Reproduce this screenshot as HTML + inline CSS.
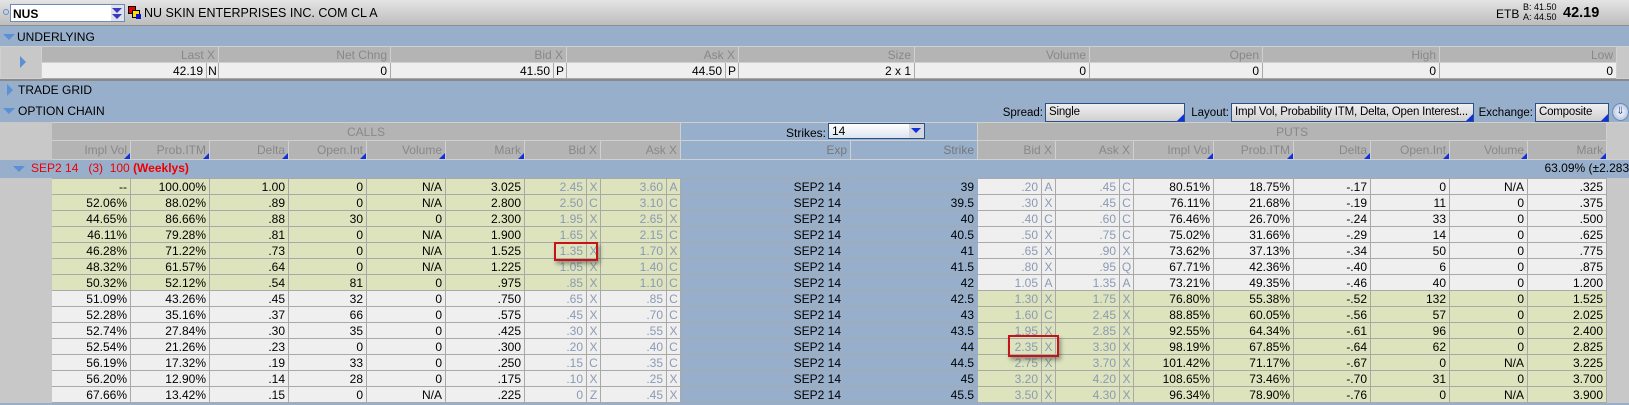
<!DOCTYPE html>
<html><head><meta charset="utf-8"><style>
*{box-sizing:border-box;margin:0;padding:0}
body{width:1629px;height:405px;overflow:hidden;background:#98afcb;font-family:"Liberation Sans",sans-serif;font-size:12px;color:#000;position:relative}
.abs{position:absolute}
.top{left:0;top:0;width:1629px;height:26px;background:linear-gradient(#e4e4e4,#bdbdbd);border-bottom:1px solid #8e8e8e}
.band{left:0;width:1629px;background:#98afcb}
.tri{position:absolute;width:0;height:0}
.tdown{border-left:6px solid transparent;border-right:6px solid transparent;border-top:6px solid #5b8fd6}
.tright{border-top:6px solid transparent;border-bottom:6px solid transparent;border-left:6px solid #5b8fd6}
table{border-collapse:collapse;table-layout:fixed;position:absolute;left:0}
td{height:16px;padding:0 3px;text-align:right;white-space:nowrap;overflow:hidden;border:1px solid #a9a9a9;font-size:12px;line-height:14px}
td.l{padding:0 1px;text-align:center}
td.gut{background:#c8c8c8!important;border-color:#c8c8c8}
td.bl{background:#98afcb!important;border-left-color:#98afcb;border-right-color:#98afcb;text-align:right;padding-right:9px}
td.bl.s{padding-right:3px}
td.q{color:#8b9ab4}
.hd td{background:#b4b4b4;color:#888;position:relative;border-color:#d0d0d0}
.hd td.srt::after{content:"";position:absolute;right:0;bottom:0;border-left:6px solid transparent;border-bottom:6px solid #1030e0}
.box{position:absolute;height:19px;background:linear-gradient(#f0f0f0,#cfcfcf);border:1px solid #2a4f8a;font-size:11.5px;padding:2px 3px;white-space:nowrap;overflow:hidden;letter-spacing:-0.2px}
.box::after{content:"";position:absolute;right:0;bottom:0;border-left:7px solid transparent;border-bottom:7px solid #1030e0}
.lab{position:absolute;top:107px;font-size:11.5px;text-align:right;white-space:nowrap}
.red{position:absolute;border:2px solid #c4141b;box-shadow:2px 3px 4px rgba(0,0,0,.35)}
.cg,.pg{background:#dce3bd}.cw,.pw{background:#efefef}
</style></head><body>

<div class="abs top"></div>
<div class="abs" style="left:3px;top:9px;width:6px;height:6px;border:1px solid #5b8fd6;border-radius:50%"></div>
<div class="abs" style="left:10px;top:4px;width:115px;height:18px;background:#fff;border:1px solid #6d8bb7;font-weight:bold;font-size:12px;padding:2px 2px">NUS</div>
<div class="abs" style="left:111px;top:5px;width:13px;height:16px;background:#dfe3ea"></div>
<div class="abs tri" style="left:112px;top:8px;border-left:5px solid transparent;border-right:5px solid transparent;border-top:5px solid #3a3ac0"></div>
<div class="abs tri" style="left:112px;top:14px;border-left:5px solid transparent;border-right:5px solid transparent;border-top:5px solid #3a3ac0"></div>
<div class="abs" style="left:128px;top:6px;width:8px;height:8px;background:#e00;border:1px solid #000"></div>
<div class="abs" style="left:132px;top:10px;width:8px;height:8px;background:#fd0;border:1px solid #000"></div>
<div class="abs" style="left:136px;top:14px;width:5px;height:5px;background:#11c"></div>
<div class="abs" style="left:144px;top:6px;font-size:12.5px">NU SKIN ENTERPRISES INC. COM CL A</div>
<div class="abs" style="left:1496px;top:7px;font-size:12px">ETB</div>
<div class="abs" style="left:1523px;top:2px;font-size:9px;line-height:10px">B: 41.50<br>A: 44.50</div>
<div class="abs" style="left:1563px;top:5px;font-size:14.5px;font-weight:bold">42.19</div>

<div class="abs band" style="top:27px;height:19px"></div>
<div class="tri tdown" style="left:3px;top:34px"></div>
<div class="abs" style="left:17px;top:30px;font-size:12px">UNDERLYING</div>

<table style="top:46px;width:1629px">
<colgroup><col style="width:41px"><col style="width:165px"><col style="width:12px"><col style="width:172px"><col style="width:163px"><col style="width:13px"><col style="width:159px"><col style="width:13px"><col style="width:176px"><col style="width:175px"><col style="width:173px"><col style="width:177px"><col style="width:177px"><col style="width:13px"></colgroup>
<tr class="hd"><td class="gut" rowspan="2" style="position:relative"><div class="tri tright" style="left:19px;top:9px"></div></td><td colspan="2">Last X</td><td>Net Chng</td><td colspan="2">Bid X</td><td colspan="2">Ask X</td><td>Size</td><td>Volume</td><td>Open</td><td>High</td><td>Low</td><td class="gut" rowspan="2"></td></tr>
<tr><td class="cw">42.19</td><td class="cw l">N</td><td class="cw">0</td><td class="cw">41.50</td><td class="cw l">P</td><td class="cw">44.50</td><td class="cw l">P</td><td class="cw">2 x 1</td><td class="cw">0</td><td class="cw">0</td><td class="cw">0</td><td class="cw">0</td></tr>
</table>
<div class="abs" style="left:0;top:79px;width:1629px;height:2px;background:#8a8a8a"></div>

<div class="tri tright" style="left:7px;top:84px"></div>
<div class="abs" style="left:18px;top:83px;font-size:12px">TRADE GRID</div>
<div class="tri tdown" style="left:3px;top:108px"></div>
<div class="abs" style="left:18px;top:104px;font-size:12px">OPTION CHAIN</div>

<div class="lab" style="right:586px">Spread:</div>
<div class="box" style="left:1045px;top:103px;width:140px">Single</div>
<div class="lab" style="right:400px">Layout:</div>
<div class="box" style="left:1231px;top:103px;width:243px">Impl Vol, Probability ITM, Delta, Open Interest...</div>
<div class="lab" style="right:96px">Exchange:</div>
<div class="box" style="left:1535px;top:103px;width:74px">Composite</div>
<div class="abs" style="left:1612px;top:103px;width:17px;height:18px;border-radius:50%;background:radial-gradient(#fff,#9db4d6);border:1px solid #6d8bb7;font-size:10px;color:#3050a0;text-align:center;line-height:16px">&#8659;</div>

<table style="top:122px;width:1629px">
<colgroup><col style="width:51px"><col style="width:79px"><col style="width:79px"><col style="width:79px"><col style="width:78px"><col style="width:79px"><col style="width:79px"><col style="width:62px"><col style="width:14px"><col style="width:66px"><col style="width:14px"><col style="width:170px"><col style="width:127px"><col style="width:64px"><col style="width:14px"><col style="width:64px"><col style="width:14px"><col style="width:80px"><col style="width:80px"><col style="width:77px"><col style="width:79px"><col style="width:78px"><col style="width:79px"><col style="width:23px"></colgroup>
<tr class="hd" style="height:18px"><td class="gut" rowspan="2" style="border-color:#c8c8c8"></td><td colspan="10" style="text-align:center">CALLS</td><td class="bl" colspan="2"></td><td colspan="10" style="text-align:center">PUTS</td><td style="background:#c8c8c8" rowspan="2"></td></tr>
<tr class="hd" style="height:19px"><td class="srt">Impl Vol</td><td class="srt">Prob.ITM</td><td class="srt">Delta</td><td class="srt">Open.Int</td><td class="srt">Volume</td><td class="srt">Mark</td><td colspan="2">Bid X</td><td colspan="2">Ask X</td><td class="bl s" style="color:#777">Exp</td><td class="bl s" style="color:#777">Strike</td><td colspan="2">Bid X</td><td colspan="2">Ask X</td><td class="srt">Impl Vol</td><td class="srt">Prob.ITM</td><td class="srt">Delta</td><td class="srt">Open.Int</td><td class="srt">Volume</td><td class="srt">Mark</td></tr>
<tr style="height:17px"><td colspan="24" style="background:#98afcb;border-color:#98afcb;text-align:left;color:#e00;padding-left:30px;position:relative;height:17px">SEP2 14 &nbsp;&nbsp;(3) &nbsp;100 <b>(Weeklys)</b><span style="position:absolute;right:0;top:1px;color:#000">63.09% (±2.283</span><div class="tri tdown" style="left:12px;top:6px"></div></td></tr>
</table>

<div class="abs" style="left:786px;top:126px;font-size:12px">Strikes:</div>
<div class="abs" style="left:828px;top:123px;width:97px;height:16px;background:linear-gradient(#fff,#dce4f0);border:1px solid #2a4f8a;padding:0 3px;font-size:12px">14</div>
<div class="abs" style="left:909px;top:124px;width:15px;height:14px;background:#d4d8de"></div>
<div class="tri" style="left:911px;top:128px;border-left:5px solid transparent;border-right:5px solid transparent;border-top:5px solid #1030e0"></div>

<table style="top:178px;width:1629px">
<colgroup><col style="width:51px"><col style="width:79px"><col style="width:79px"><col style="width:79px"><col style="width:78px"><col style="width:79px"><col style="width:79px"><col style="width:62px"><col style="width:14px"><col style="width:66px"><col style="width:14px"><col style="width:170px"><col style="width:127px"><col style="width:64px"><col style="width:14px"><col style="width:64px"><col style="width:14px"><col style="width:80px"><col style="width:80px"><col style="width:77px"><col style="width:79px"><col style="width:78px"><col style="width:79px"><col style="width:23px"></colgroup>
<tbody>
<tr><td class="gut"></td><td class="cg">--</td><td class="cg">100.00%</td><td class="cg">1.00</td><td class="cg">0</td><td class="cg">N/A</td><td class="cg">3.025</td><td class="cg q">2.45</td><td class="cg l q">X</td><td class="cg q">3.60</td><td class="cg l q">A</td><td class="bl">SEP2 14</td><td class="bl s">39</td><td class="pw q">.20</td><td class="pw l q">A</td><td class="pw q">.45</td><td class="pw l q">C</td><td class="pw">80.51%</td><td class="pw">18.75%</td><td class="pw">-.17</td><td class="pw">0</td><td class="pw">N/A</td><td class="pw">.325</td><td class="gut"></td></tr>
<tr><td class="gut"></td><td class="cg">52.06%</td><td class="cg">88.02%</td><td class="cg">.89</td><td class="cg">0</td><td class="cg">N/A</td><td class="cg">2.800</td><td class="cg q">2.50</td><td class="cg l q">C</td><td class="cg q">3.10</td><td class="cg l q">C</td><td class="bl">SEP2 14</td><td class="bl s">39.5</td><td class="pw q">.30</td><td class="pw l q">X</td><td class="pw q">.45</td><td class="pw l q">C</td><td class="pw">76.11%</td><td class="pw">21.68%</td><td class="pw">-.19</td><td class="pw">11</td><td class="pw">0</td><td class="pw">.375</td><td class="gut"></td></tr>
<tr><td class="gut"></td><td class="cg">44.65%</td><td class="cg">86.66%</td><td class="cg">.88</td><td class="cg">30</td><td class="cg">0</td><td class="cg">2.300</td><td class="cg q">1.95</td><td class="cg l q">X</td><td class="cg q">2.65</td><td class="cg l q">X</td><td class="bl">SEP2 14</td><td class="bl s">40</td><td class="pw q">.40</td><td class="pw l q">C</td><td class="pw q">.60</td><td class="pw l q">C</td><td class="pw">76.46%</td><td class="pw">26.70%</td><td class="pw">-.24</td><td class="pw">33</td><td class="pw">0</td><td class="pw">.500</td><td class="gut"></td></tr>
<tr><td class="gut"></td><td class="cg">46.11%</td><td class="cg">79.28%</td><td class="cg">.81</td><td class="cg">0</td><td class="cg">N/A</td><td class="cg">1.900</td><td class="cg q">1.65</td><td class="cg l q">X</td><td class="cg q">2.15</td><td class="cg l q">C</td><td class="bl">SEP2 14</td><td class="bl s">40.5</td><td class="pw q">.50</td><td class="pw l q">X</td><td class="pw q">.75</td><td class="pw l q">C</td><td class="pw">75.02%</td><td class="pw">31.66%</td><td class="pw">-.29</td><td class="pw">14</td><td class="pw">0</td><td class="pw">.625</td><td class="gut"></td></tr>
<tr><td class="gut"></td><td class="cg">46.28%</td><td class="cg">71.22%</td><td class="cg">.73</td><td class="cg">0</td><td class="cg">N/A</td><td class="cg">1.525</td><td class="cg q">1.35</td><td class="cg l q">X</td><td class="cg q">1.70</td><td class="cg l q">X</td><td class="bl">SEP2 14</td><td class="bl s">41</td><td class="pw q">.65</td><td class="pw l q">X</td><td class="pw q">.90</td><td class="pw l q">X</td><td class="pw">73.62%</td><td class="pw">37.13%</td><td class="pw">-.34</td><td class="pw">50</td><td class="pw">0</td><td class="pw">.775</td><td class="gut"></td></tr>
<tr><td class="gut"></td><td class="cg">48.32%</td><td class="cg">61.57%</td><td class="cg">.64</td><td class="cg">0</td><td class="cg">N/A</td><td class="cg">1.225</td><td class="cg q">1.05</td><td class="cg l q">X</td><td class="cg q">1.40</td><td class="cg l q">C</td><td class="bl">SEP2 14</td><td class="bl s">41.5</td><td class="pw q">.80</td><td class="pw l q">X</td><td class="pw q">.95</td><td class="pw l q">Q</td><td class="pw">67.71%</td><td class="pw">42.36%</td><td class="pw">-.40</td><td class="pw">6</td><td class="pw">0</td><td class="pw">.875</td><td class="gut"></td></tr>
<tr><td class="gut"></td><td class="cg">50.32%</td><td class="cg">52.12%</td><td class="cg">.54</td><td class="cg">81</td><td class="cg">0</td><td class="cg">.975</td><td class="cg q">.85</td><td class="cg l q">X</td><td class="cg q">1.10</td><td class="cg l q">C</td><td class="bl">SEP2 14</td><td class="bl s">42</td><td class="pw q">1.05</td><td class="pw l q">A</td><td class="pw q">1.35</td><td class="pw l q">A</td><td class="pw">73.21%</td><td class="pw">49.35%</td><td class="pw">-.46</td><td class="pw">40</td><td class="pw">0</td><td class="pw">1.200</td><td class="gut"></td></tr>
<tr><td class="gut"></td><td class="cw">51.09%</td><td class="cw">43.26%</td><td class="cw">.45</td><td class="cw">32</td><td class="cw">0</td><td class="cw">.750</td><td class="cw q">.65</td><td class="cw l q">X</td><td class="cw q">.85</td><td class="cw l q">C</td><td class="bl">SEP2 14</td><td class="bl s">42.5</td><td class="pg q">1.30</td><td class="pg l q">X</td><td class="pg q">1.75</td><td class="pg l q">X</td><td class="pg">76.80%</td><td class="pg">55.38%</td><td class="pg">-.52</td><td class="pg">132</td><td class="pg">0</td><td class="pg">1.525</td><td class="gut"></td></tr>
<tr><td class="gut"></td><td class="cw">52.28%</td><td class="cw">35.16%</td><td class="cw">.37</td><td class="cw">66</td><td class="cw">0</td><td class="cw">.575</td><td class="cw q">.45</td><td class="cw l q">X</td><td class="cw q">.70</td><td class="cw l q">C</td><td class="bl">SEP2 14</td><td class="bl s">43</td><td class="pg q">1.60</td><td class="pg l q">C</td><td class="pg q">2.45</td><td class="pg l q">X</td><td class="pg">88.85%</td><td class="pg">60.05%</td><td class="pg">-.56</td><td class="pg">57</td><td class="pg">0</td><td class="pg">2.025</td><td class="gut"></td></tr>
<tr><td class="gut"></td><td class="cw">52.74%</td><td class="cw">27.84%</td><td class="cw">.30</td><td class="cw">35</td><td class="cw">0</td><td class="cw">.425</td><td class="cw q">.30</td><td class="cw l q">X</td><td class="cw q">.55</td><td class="cw l q">X</td><td class="bl">SEP2 14</td><td class="bl s">43.5</td><td class="pg q">1.95</td><td class="pg l q">X</td><td class="pg q">2.85</td><td class="pg l q">X</td><td class="pg">92.55%</td><td class="pg">64.34%</td><td class="pg">-.61</td><td class="pg">96</td><td class="pg">0</td><td class="pg">2.400</td><td class="gut"></td></tr>
<tr><td class="gut"></td><td class="cw">52.54%</td><td class="cw">21.26%</td><td class="cw">.23</td><td class="cw">0</td><td class="cw">0</td><td class="cw">.300</td><td class="cw q">.20</td><td class="cw l q">X</td><td class="cw q">.40</td><td class="cw l q">C</td><td class="bl">SEP2 14</td><td class="bl s">44</td><td class="pg q">2.35</td><td class="pg l q">X</td><td class="pg q">3.30</td><td class="pg l q">X</td><td class="pg">98.19%</td><td class="pg">67.85%</td><td class="pg">-.64</td><td class="pg">62</td><td class="pg">0</td><td class="pg">2.825</td><td class="gut"></td></tr>
<tr><td class="gut"></td><td class="cw">56.19%</td><td class="cw">17.32%</td><td class="cw">.19</td><td class="cw">33</td><td class="cw">0</td><td class="cw">.250</td><td class="cw q">.15</td><td class="cw l q">C</td><td class="cw q">.35</td><td class="cw l q">C</td><td class="bl">SEP2 14</td><td class="bl s">44.5</td><td class="pg q">2.75</td><td class="pg l q">X</td><td class="pg q">3.70</td><td class="pg l q">X</td><td class="pg">101.42%</td><td class="pg">71.17%</td><td class="pg">-.67</td><td class="pg">0</td><td class="pg">N/A</td><td class="pg">3.225</td><td class="gut"></td></tr>
<tr><td class="gut"></td><td class="cw">56.20%</td><td class="cw">12.90%</td><td class="cw">.14</td><td class="cw">28</td><td class="cw">0</td><td class="cw">.175</td><td class="cw q">.10</td><td class="cw l q">X</td><td class="cw q">.25</td><td class="cw l q">X</td><td class="bl">SEP2 14</td><td class="bl s">45</td><td class="pg q">3.20</td><td class="pg l q">X</td><td class="pg q">4.20</td><td class="pg l q">X</td><td class="pg">108.65%</td><td class="pg">73.46%</td><td class="pg">-.70</td><td class="pg">31</td><td class="pg">0</td><td class="pg">3.700</td><td class="gut"></td></tr>
<tr><td class="gut"></td><td class="cw">67.66%</td><td class="cw">13.42%</td><td class="cw">.15</td><td class="cw">0</td><td class="cw">N/A</td><td class="cw">.225</td><td class="cw q">0</td><td class="cw l q">Z</td><td class="cw q">.45</td><td class="cw l q">X</td><td class="bl">SEP2 14</td><td class="bl s">45.5</td><td class="pg q">3.50</td><td class="pg l q">X</td><td class="pg q">4.30</td><td class="pg l q">X</td><td class="pg">96.34%</td><td class="pg">78.90%</td><td class="pg">-.76</td><td class="pg">0</td><td class="pg">N/A</td><td class="pg">3.900</td><td class="gut"></td></tr>
</tbody></table>

<div class="red" style="left:554px;top:242px;width:44px;height:19px"></div>
<div class="red" style="left:1008px;top:335px;width:51px;height:22px"></div>
</body></html>
